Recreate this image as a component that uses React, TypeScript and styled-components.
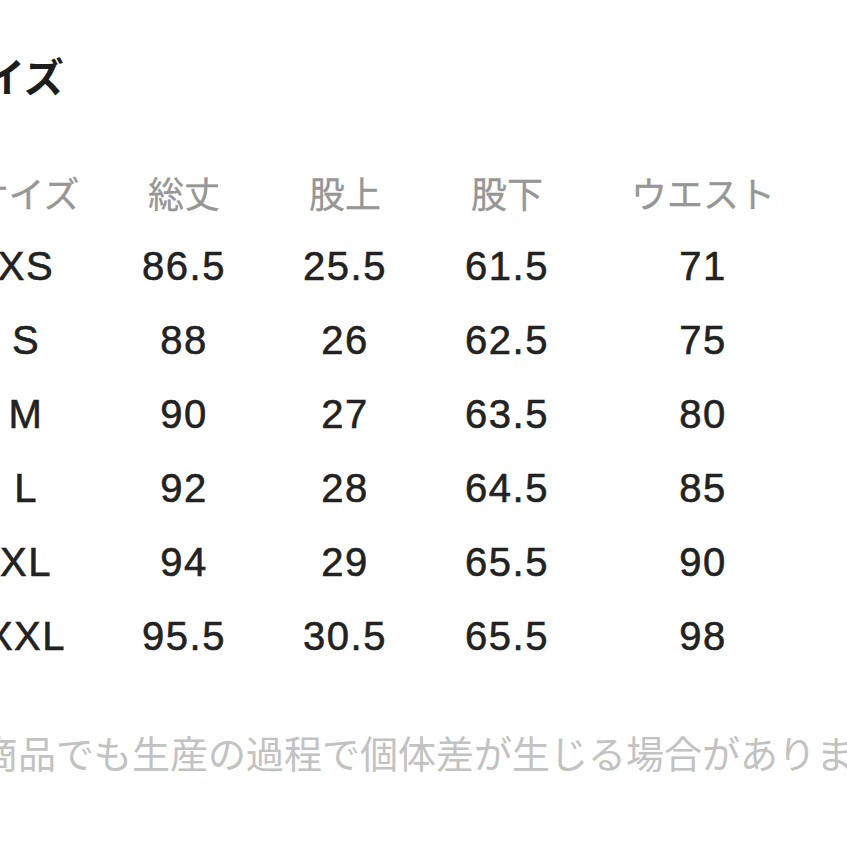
import styled, { createGlobalStyle } from 'styled-components';

const GlobalStyle = createGlobalStyle`
    html, body {
        margin: 0;
        padding: 0;
        background: #ffffff;
        overflow: hidden;
    }
    body {
        font-family: "Liberation Sans", "Noto Sans CJK JP", sans-serif;
    }
`;

const Page = styled.div`
    width: 847px;
    height: 847px;
    overflow: hidden;
    background: #fff;
`;

const Sheet = styled.div`
    margin-left: -52px;
    padding-top: 55px;
    width: 960px;
`;

const Title = styled.h1`
    margin: 0 0 0 -3px;
    font-size: 40px;
    line-height: 40px;
    font-weight: 700;
    color: #1d1d1d;
    font-family: "Noto Sans CJK JP", sans-serif;
`;

const Table = styled.div`
    margin-top: 60px;
    display: grid;
    grid-template-columns: 156px 160px 162px 162px 230px;
    grid-auto-rows: 74px;
`;

const Cell = styled.div<{ head?: boolean }>`
    display: flex;
    align-items: center;
    justify-content: center;
    white-space: nowrap;
    font-size: ${(p) => (p.head ? '36px' : '40px')};
    letter-spacing: ${(p) => (p.head ? '0' : '1.5px')};
    color: ${(p) => (p.head ? '#969696' : '#222')};
    -webkit-text-stroke: ${(p) => (p.head ? '0.3px #969696' : '0.6px #222')};
    font-family: ${(p) =>
        p.head ? '"Noto Sans CJK JP", sans-serif' : '"Liberation Sans", "Noto Sans CJK JP", sans-serif'};
`;

const Note = styled.p`
    margin: 60px 0 0 -6px;
    font-size: 38px;
    line-height: 38px;
    color: #c2c2c2;
    white-space: nowrap;
    font-family: "Noto Sans CJK JP", sans-serif;
`;

const headers = ['サイズ', '総丈', '股上', '股下', 'ウエスト'];

const rows = [
    ['XS', '86.5', '25.5', '61.5', '71'],
    ['S', '88', '26', '62.5', '75'],
    ['M', '90', '27', '63.5', '80'],
    ['L', '92', '28', '64.5', '85'],
    ['XL', '94', '29', '65.5', '90'],
    ['XXL', '95.5', '30.5', '65.5', '98'],
];

const App = () => {
    return (
        <Page>
            <GlobalStyle />
            <Sheet>
                <Title>サイズ</Title>
                <Table>
                    {headers.map((h) => (
                        <Cell head key={h}>{h}</Cell>
                    ))}
                    {rows.map((r, i) =>
                        r.map((v, j) => <Cell key={`${i}-${j}`}>{v}</Cell>)
                    )}
                </Table>
                <Note>※商品でも生産の過程で個体差が生じる場合があります。</Note>
            </Sheet>
        </Page>
    );
};

export default App;
